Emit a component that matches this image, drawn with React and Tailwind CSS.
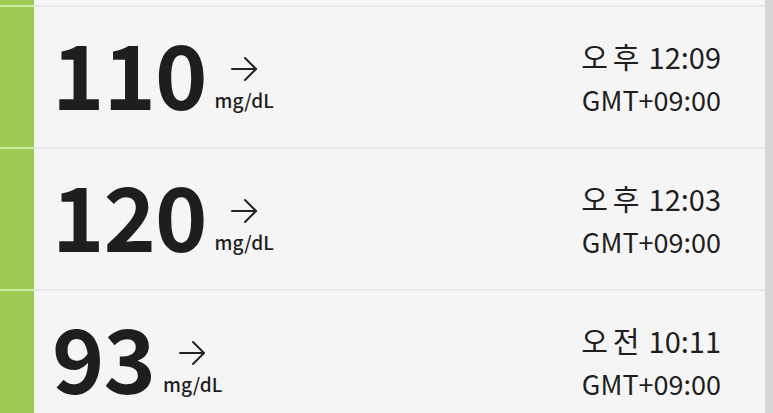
const readings = [
  { value: '110', ampm: ['오', '후'], time: '12:09' },
  { value: '120', ampm: ['오', '후'], time: '12:03' },
  { value: '93', ampm: ['오', '전'], time: '10:11' },
];

function Arrow() {
  return (
    <svg width="28" height="26" viewBox="0 0 28 26" fill="none" stroke="#222" strokeWidth="2" strokeLinecap="round" strokeLinejoin="round">
      <path d="M2 13h24" />
      <path d="M15 2l11 11-11 11" />
    </svg>
  );
}

function ReadingRow({ value, ampm, time }) {
  return (
    <div className="flex h-[140px]">
      <div className="w-[34px] shrink-0 bg-[#9dcb52]" />
      <div className="flex flex-1 items-start justify-between pl-[18px] pr-[44px]">
        <div className="flex items-start pt-[20px]">
          <span className="text-[89px] font-bold leading-none tracking-[-1px] text-[#1e1e1e]">{value}</span>
          <div className="ml-[8px] flex flex-col items-start pt-[29px]">
            <div className="ml-[15px]">
              <Arrow />
            </div>
            <span className="mt-[8px] text-[19px] font-medium leading-none text-[#1e1e1e]">mg/dL</span>
          </div>
        </div>
        <div className="flex flex-col items-end pt-[28px] text-[#1e1e1e]">
          <span className="text-[29px] leading-[43px]">
            <span className="mr-[5px]">{ampm[0]}</span>
            {ampm[1]}
            <span className="ml-[9px]">{time}</span>
          </span>
          <span className="text-[27px] leading-[43px]">GMT+09:00</span>
        </div>
      </div>
    </div>
  );
}

function Divider() {
  return (
    <div className="flex h-[2px]">
      <div className="w-[34px] shrink-0 bg-[#cfeaa8]" />
      <div className="flex-1 bg-[#e7e7e7]" />
    </div>
  );
}

export default function App() {
  return (
    <div
      className="flex h-[413px] w-full overflow-hidden bg-[#f5f5f5]"
      style={{ fontFamily: '"Noto Sans CJK KR", "Noto Sans", sans-serif' }}
    >
      <div className="flex flex-1 flex-col">
        <div className="flex h-[5px] shrink-0">
          <div className="w-[34px] shrink-0 bg-[#9dcb52]" />
          <div className="flex-1" />
        </div>
        {readings.map((r) => (
          <div key={r.time} className="shrink-0">
            <Divider />
            <ReadingRow {...r} />
          </div>
        ))}
      </div>
      <div className="w-[8px] shrink-0 bg-[#d6d6d6]" />
    </div>
  );
}
